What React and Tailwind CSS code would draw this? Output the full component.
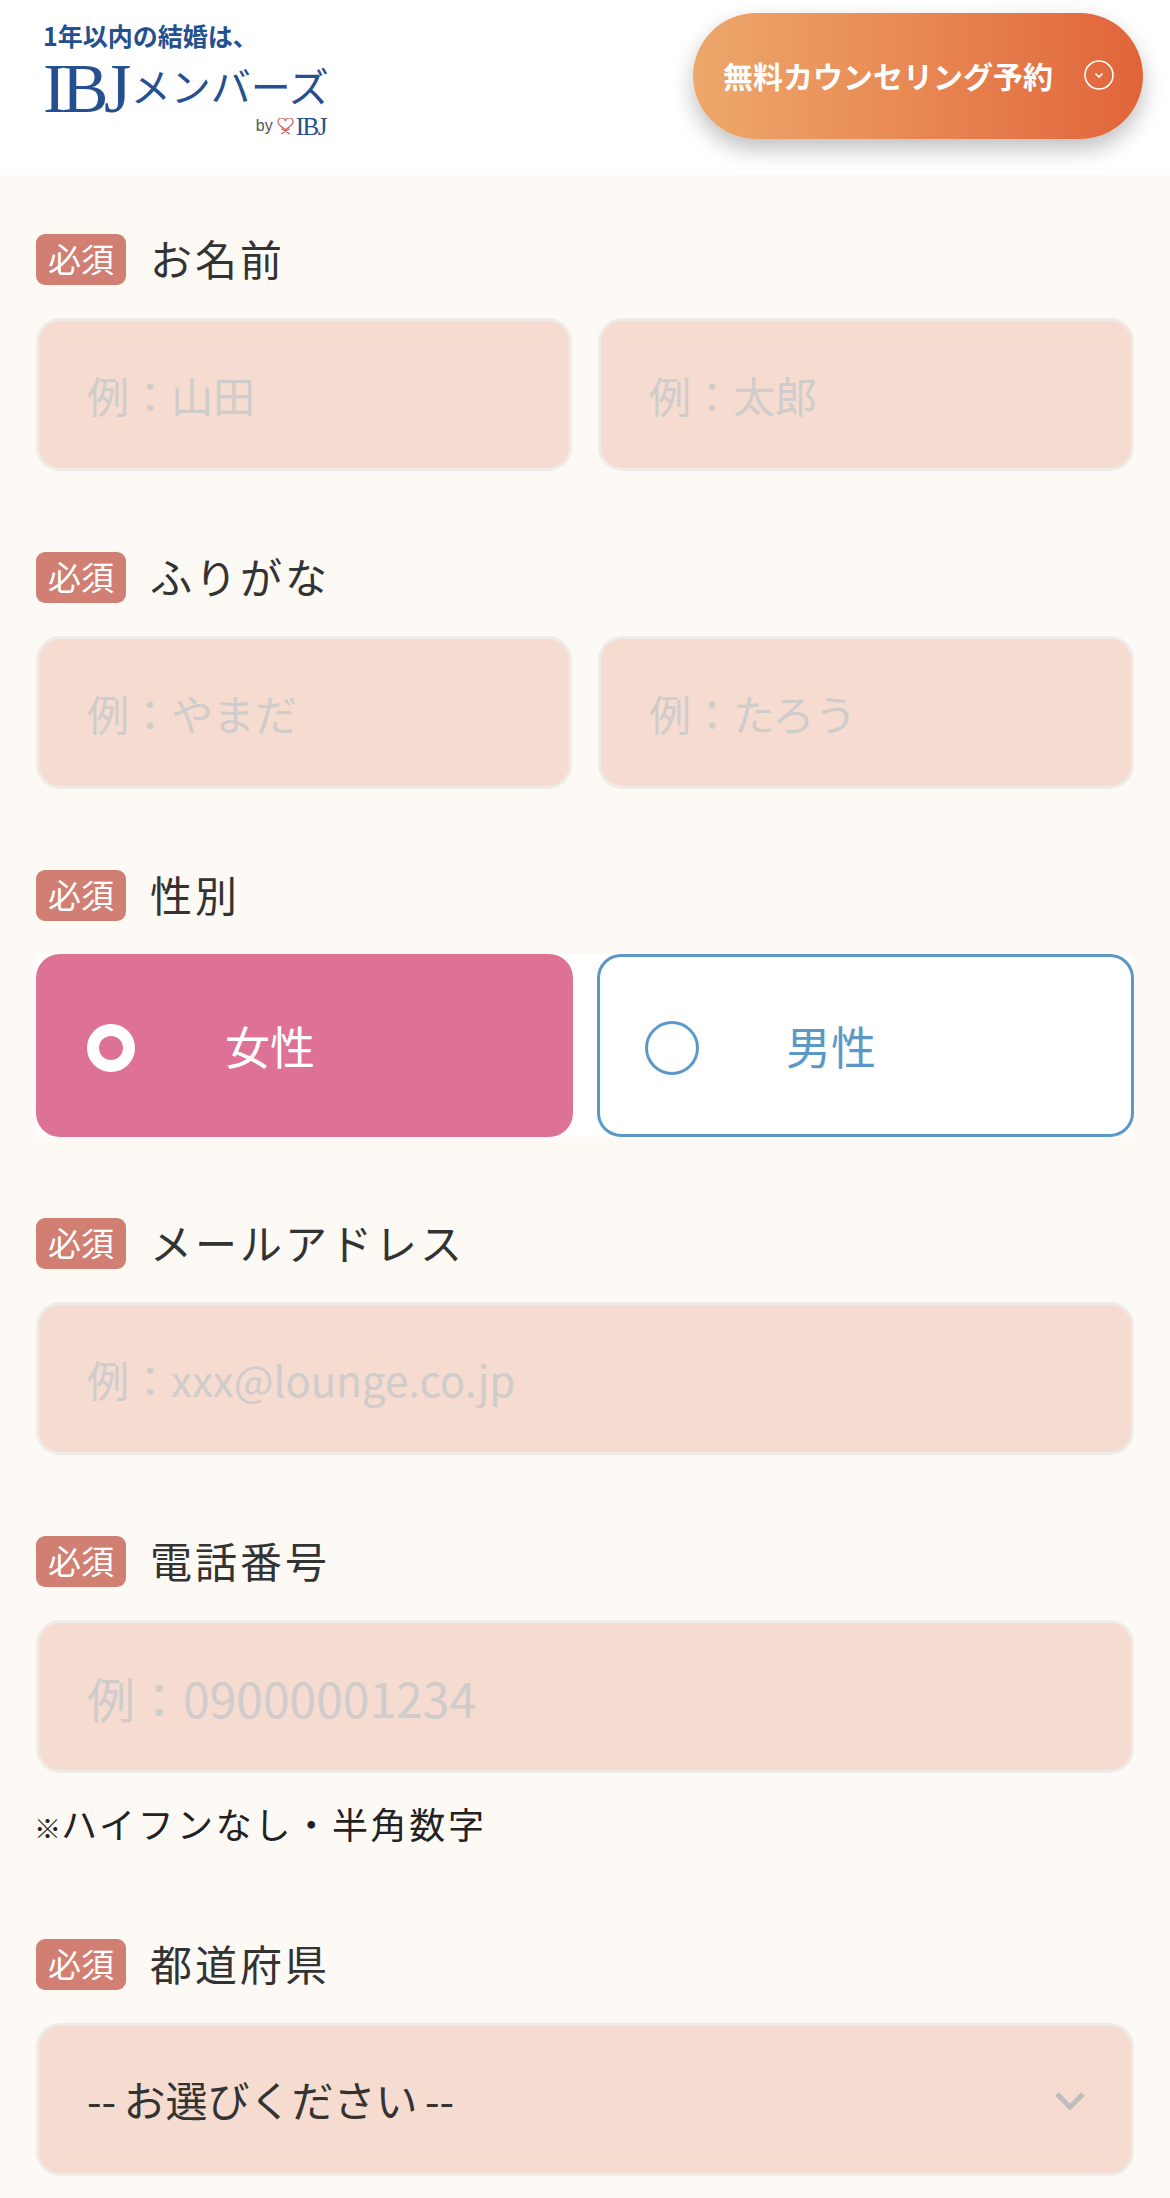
import React from "react";

const jp = "font-['Noto_Sans_CJK_JP','Noto_Sans',sans-serif]";

const Label = ({ children }) => (
  <div className="flex items-center h-[51px] mb-[33px]">
    <span className="flex items-center justify-center w-[90px] h-[51px] pb-[2px] rounded-[9px] bg-[#d07f72] text-white text-[33px] leading-none">
      必須
    </span>
    <span className="ml-[24px] pb-[4px] text-[42px] leading-none tracking-[3px] text-[#333]">
      {children}
    </span>
  </div>
);

const TextInput = ({ placeholder, large }) => (
  <input
    type="text"
    placeholder={placeholder}
    className={`w-full min-w-0 h-[153px] px-[48px] rounded-[24px] border-[3px] border-[#efebe8] bg-[#f5dbd0] text-[#333] placeholder:text-[#cfcccb] outline-none ${
      large ? "text-[48px]" : "text-[42px]"
    }`}
  />
);

const Radio = ({ label, checked }) =>
  checked ? (
    <div className="flex items-center h-[183px] pl-[51px] rounded-[24px] bg-[#de7296] text-white">
      <span className="flex items-center justify-center w-[48px] h-[48px] mt-[5px] rounded-full bg-white">
        <span className="w-[24px] h-[24px] rounded-full bg-[#de7296]" />
      </span>
      <span className="ml-[90px] text-[45px] leading-none">{label}</span>
    </div>
  ) : (
    <div className="flex items-center h-[183px] pl-[45px] rounded-[24px] border-[3px] border-[#5b98c8] bg-white text-[#5b98c8]">
      <span className="w-[54px] h-[54px] mt-[4px] rounded-full border-[3px] border-[#5b98c8]" />
      <span className="ml-[87px] text-[45px] leading-none">{label}</span>
    </div>
  );

export default function App() {
  return (
    <div className={`${jp} w-[1170px] h-[2198px] overflow-hidden bg-[#fdfaf6]`}>
      {/* header */}
      <header className="flex justify-between h-[175px] bg-white pl-[43px] pr-[27px]">
        <div className="pt-[21px] w-[290px] text-[#24508f]">
          <div className="text-[25px] font-bold leading-[28px] whitespace-nowrap">
            1年以内の結婚は、
          </div>
          <div className="flex items-baseline h-[62px] mt-[9px]">
            <span className="font-['Liberation_Serif',serif] text-[70px] leading-[62px] tracking-[-4.5px]">
              IBJ
            </span>
            <span className="ml-[4px] -translate-y-[10px] text-[40px] leading-none whitespace-nowrap">
              メンバーズ
            </span>
          </div>
          <div className="flex items-center justify-end w-[283px] h-[20px] -mt-[4px]">
            <span className="font-['Liberation_Sans',sans-serif] text-[16px] leading-none text-[#555]">
              by
            </span>
            <svg
              className="ml-[4px]"
              width="17"
              height="17"
              viewBox="0 0 16 16"
              fill="none"
              stroke="#d0524f"
              strokeWidth="1.1"
            >
              <path d="M8 11C4 8 1 6.500 1 4a3 3 0 0 1 7-1 3 3 0 0 1 7 1c0 2.500-3 4-7 7ZM4 15l8-5M12 15 4 10" />
            </svg>
            <span className="ml-[2px] font-['Liberation_Serif',serif] text-[25px] leading-none tracking-[-1.5px]">
              IBJ
            </span>
          </div>
        </div>
        <div className="flex items-center self-start mt-[13px] w-[450px] h-[126px] pl-[30px] pb-[2px] rounded-full bg-gradient-to-r from-[#eda86b] to-[#e0643a] shadow-[0_10px_22px_rgba(0,0,0,0.25)] text-white">
          <span className="text-[30px] font-bold leading-none whitespace-nowrap">
            無料カウンセリング予約
          </span>
          <svg
            className="ml-[31px]"
            width="30"
            height="30"
            viewBox="0 0 30 30"
            fill="none"
            stroke="white"
            strokeWidth="1.6"
          >
            <circle cx="15" cy="15" r="14" />
            <path d="M11.500 13.500 15 17l3.500-3.500" />
          </svg>
        </div>
      </header>

      {/* form */}
      <main className="pt-[59px] pl-[36px] pr-[36px]">
        <section className="mb-[81px]">
          <Label>お名前</Label>
          <div className="grid grid-cols-2 gap-[26px]">
            <TextInput placeholder="例：山田" />
            <TextInput placeholder="例：太郎" />
          </div>
        </section>

        <section className="mb-[81px]">
          <Label>ふりがな</Label>
          <div className="grid grid-cols-2 gap-[26px]">
            <TextInput placeholder="例：やまだ" />
            <TextInput placeholder="例：たろう" />
          </div>
        </section>

        <section className="mb-[81px]">
          <Label>性別</Label>
          <div className="grid grid-cols-2 gap-[24px] bg-white">
            <Radio label="女性" checked />
            <Radio label="男性" />
          </div>
        </section>

        <section className="mb-[81px]">
          <Label>メールアドレス</Label>
          <TextInput placeholder="例：xxx@lounge.co.jp" />
        </section>

        <section className="mb-[81px]">
          <Label>電話番号</Label>
          <TextInput placeholder="例：09000001234" large />
          <p className="mt-[28px] h-[57px] -ml-[2px] text-[36px] leading-[44px] tracking-[2.7px] text-[#222]">
            <span className="text-[27px] font-bold tracking-normal">※</span>
            ハイフンなし・半角数字
          </p>
        </section>

        <section>
          <Label>都道府県</Label>
          <div className="relative">
            <select className="w-full h-[153px] px-[48px] pb-[3px] rounded-[24px] border-[3px] border-[#efebe8] bg-[#f5dbd0] text-[42px] text-[#333] [word-spacing:-2px] appearance-none outline-none">
              <option>-- お選びください --</option>
            </select>
            <svg
              className="absolute right-[48px] top-[68px]"
              width="32"
              height="20"
              viewBox="0 0 32 20"
              fill="none"
              stroke="#bdbdbd"
              strokeWidth="5"
            >
              <path d="M3 3l13 13L29 3" />
            </svg>
          </div>
        </section>
      </main>
    </div>
  );
}
